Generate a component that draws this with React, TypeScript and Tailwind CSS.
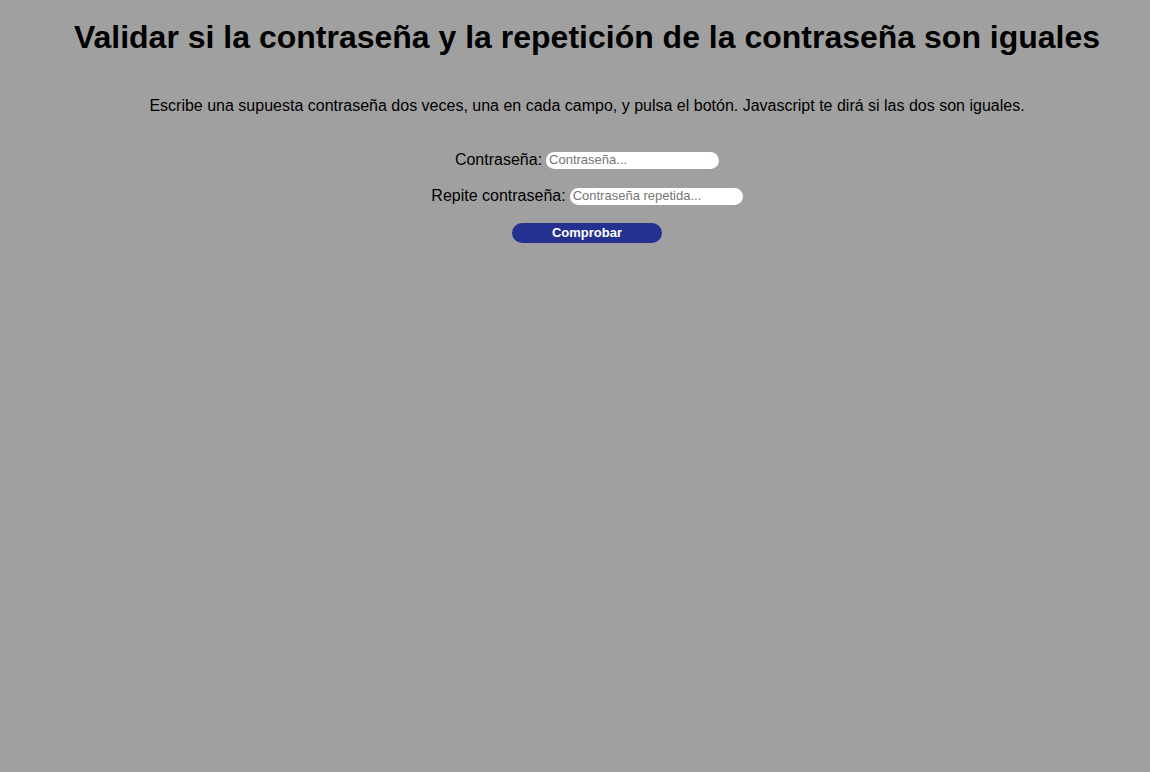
export default function App() {
  return (
    <div className="min-h-[772px] w-full bg-[#a0a0a0] pl-6 text-center text-black" style={{ fontFamily: '"Liberation Sans", Arial, sans-serif' }}>
      <h1 className="pt-[19px] text-[32px] font-bold leading-[37px]">Validar si la contraseña y la repetición de la contraseña son iguales</h1>
      <p className="mt-[41px] text-[16px] leading-[18px]">Escribe una supuesta contraseña dos veces, una en cada campo, y pulsa el botón. Javascript te dirá si las dos son iguales.</p>
      <div className="mt-[36px] flex flex-col items-center gap-[18px]">
        <div className="flex items-center text-[16px] leading-[18px]">
          <span>Contraseña:</span>
          <input type="password" placeholder="Contraseña..." className="ml-[4px] h-[17px] w-[173px] rounded-full bg-white px-[3px] text-[13px] text-black outline-none placeholder:text-[#757575]" />
        </div>
        <div className="flex items-center text-[16px] leading-[18px]">
          <span>Repite contraseña:</span>
          <input type="password" placeholder="Contraseña repetida..." className="ml-[4px] h-[17px] w-[173px] rounded-full bg-white px-[3px] text-[13px] text-black outline-none placeholder:text-[#757575]" />
        </div>
        <button className="h-[20px] w-[150px] rounded-full bg-[#243190] text-[13px] font-bold leading-[20px] text-white">Comprobar</button>
      </div>
    </div>
  );
}
